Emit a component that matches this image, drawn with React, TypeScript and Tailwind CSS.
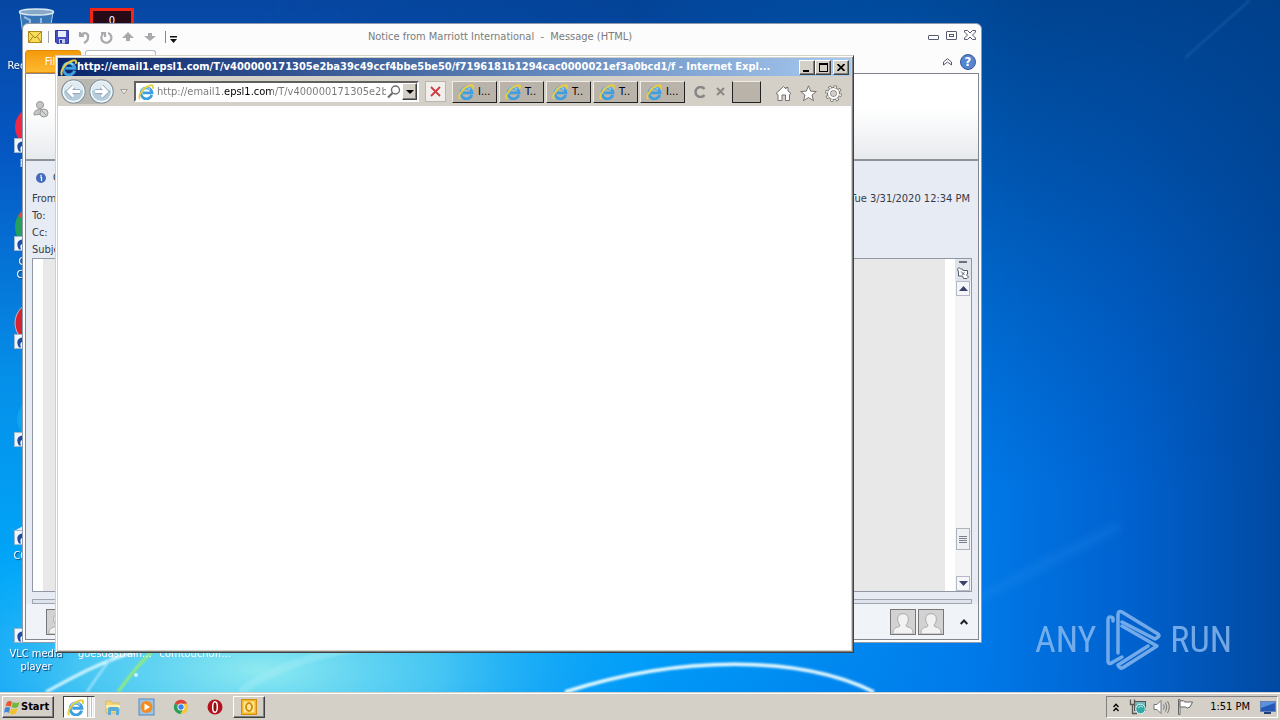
import type { ReactNode } from "react";

const raised =
  "bg-[#d4d0c8] border border-t-white border-l-white border-r-[#404040] border-b-[#404040] shadow-[inset_-1px_-1px_0_#808080]";

function IeLogo({ className = "size-4" }: { className?: string }) {
  return (
    <svg viewBox="0 0 16 16" className={className} aria-hidden="true">
      <path
        d="M13.800 11A5.500 5.500 0 1 1 14 8.800H5"
        fill="none"
        stroke="#3d9fe2"
        strokeWidth="2.800"
      />
      <path d="M3.800 6A5 5 0 0 1 12.200 5.600" fill="none" stroke="#9adcf8" strokeWidth="1.200" />
      <path
        d="M2.200 15C-.2 13.400 2.500 7.400 7 4C11 1 14.800.6 15 2.200C15.200 3 15 4 14.400 4.600"
        fill="none"
        stroke="#e9cf3c"
        strokeWidth="1.800"
      />
    </svg>
  );
}

function Shortcut() {
  return (
    <svg viewBox="0 0 15 15" className="size-[15px]" aria-hidden="true">
      <rect x=".5" y=".5" width="14" height="14" fill="#eef6fc" stroke="#9db7cc" />
      <path d="M5 13.500C2 9 3 4 8 3.500V1.500L13 6L8 10.500V8C6 8.500 6 11 7 13.500Z" fill="#1f4aa3" />
    </svg>
  );
}

function DesktopIcon({ label, children }: { label?: string; children: ReactNode }) {
  return (
    <li className="flex h-[98px] w-[72px] flex-col items-center">
      <div className="relative h-12 w-11 shrink-0">{children}</div>
      <span className="mt-1 text-center leading-[13px] text-white [text-shadow:1px_1px_1px_#0a3a70]">
        {label}
      </span>
    </li>
  );
}

function ShortcutArt({ children }: { children?: ReactNode }) {
  return (
    <>
      <svg viewBox="0 0 44 48" className="h-12 w-11" aria-hidden="true">
        {children}
      </svg>
      <span className="absolute bottom-0 left-0">
        <Shortcut />
      </span>
    </>
  );
}

function Wallpaper() {
  return (
    <svg
      className="absolute inset-0 size-full"
      viewBox="0 0 1280 692"
      preserveAspectRatio="none"
      aria-hidden="true"
    >
      <defs>
        <linearGradient id="base" x1="0" y1="0" x2="0" y2="1">
          <stop offset="0" stopColor="#0747a3" />
          <stop offset=".22" stopColor="#0557c4" />
          <stop offset=".55" stopColor="#0590ea" />
          <stop offset=".85" stopColor="#00a8fa" />
          <stop offset="1" stopColor="#0098f8" />
        </linearGradient>
        <linearGradient id="east" x1="0" y1="0" x2="1" y2="0">
          <stop offset=".5" stopColor="#0079e8" stopOpacity="0" />
          <stop offset=".76" stopColor="#0078e8" stopOpacity=".95" />
          <stop offset=".88" stopColor="#0062cf" />
          <stop offset="1" stopColor="#0049a2" />
        </linearGradient>
        <linearGradient id="north" x1="0" y1="0" x2="0" y2="1">
          <stop offset="0" stopColor="#003f88" stopOpacity=".9" />
          <stop offset=".25" stopColor="#00438f" stopOpacity=".6" />
          <stop offset=".7" stopColor="#0050a8" stopOpacity="0" />
        </linearGradient>
        <linearGradient id="fade" x1="0" y1="0" x2="1" y2="0">
          <stop offset=".2" stopColor="#000" />
          <stop offset=".8" stopColor="#fff" />
        </linearGradient>
        <mask id="northMask">
          <rect width="1280" height="692" fill="url(#fade)" />
        </mask>
        <radialGradient id="glow" gradientUnits="userSpaceOnUse" cx="0" cy="0" r="1" gradientTransform="translate(260 670) scale(400 150)">
          <stop offset="0" stopColor="#8eeaf0" />
          <stop offset=".45" stopColor="#52cdf2" stopOpacity=".85" />
          <stop offset="1" stopColor="#10a8f8" stopOpacity="0" />
        </radialGradient>
        <filter id="soft">
          <feGaussianBlur stdDeviation="1.200" />
        </filter>
        <filter id="haze">
          <feGaussianBlur stdDeviation="4" />
        </filter>
      </defs>
      <rect width="1280" height="692" fill="url(#base)" />
      <rect width="1280" height="692" fill="url(#east)" />
      <rect width="1280" height="692" fill="url(#north)" mask="url(#northMask)" />
      <rect width="1280" height="692" fill="url(#glow)" />
      <g fill="none" filter="url(#soft)">
        <path d="M46 692C75 676 100 662 140 650" stroke="#d6f6ff" strokeWidth="3" />
        <path d="M87 692C95 680 105 665 118 650" stroke="#a5e5fa" strokeWidth="2" />
        <path d="M118 692C128 678 140 662 156 648" stroke="#9cf06b" strokeWidth="2.500" />
        <path d="M240 692C270 670 310 655 360 648" stroke="#b4f3f7" strokeWidth="8" opacity=".3" />
        <path d="M565 692C680 655 800 655 874 692" stroke="#e9fbff" strokeWidth="3.500" />
        <path d="M1185 58L1250 0" stroke="#3a80c8" strokeWidth="3" opacity=".25" />
      </g>
      <path d="M975 600L1120 525" stroke="#3a9af5" strokeWidth="9" opacity=".2" filter="url(#haze)" />
      <circle cx="136" cy="675" r="2" fill="#c8f6ff" />
    </svg>
  );
}

function Desktop() {
  return (
    <>
      <ul className="absolute left-0 top-[7px]">
        <DesktopIcon label="Recycle Bin">
          <svg viewBox="0 0 44 48" className="h-12 w-11" aria-hidden="true">
            <path d="M6 5L11 43H33L39 5Z" fill="#3775b5" stroke="#a9cde8" />
            <ellipse cx="22.500" cy="5" rx="17" ry="3" fill="#87a9c7" stroke="#d9e9f5" strokeWidth="1.500" />
            <path d="M10 10L16 13L15 42M27 11L26 42" stroke="#93bce0" fill="none" strokeWidth="2" />
          </svg>
        </DesktopIcon>
        <DesktopIcon label="Firefox">
          <ShortcutArt>
            <circle cx="22" cy="22" r="21" fill="#f02845" />
          </ShortcutArt>
        </DesktopIcon>
        <DesktopIcon label="Google Chrome">
          <ShortcutArt>
            <circle cx="23" cy="24" r="22" fill="#24a05a" />
            <path d="M4 13A22 22 0 0 1 42 13L23 24Z" fill="#de4c3c" />
          </ShortcutArt>
        </DesktopIcon>
        <DesktopIcon>
          <ShortcutArt>
            <circle cx="22" cy="22" r="21" fill="#d32531" stroke="#f2a6a6" />
          </ShortcutArt>
        </DesktopIcon>
        <DesktopIcon>
          <ShortcutArt>
            <circle cx="24" cy="20" r="21" fill="#10a4ee" />
          </ShortcutArt>
        </DesktopIcon>
        <DesktopIcon label="CCleaner">
          <ShortcutArt>
            <path d="M0 34L18 24L28 40Z" fill="#dce8ee" />
          </ShortcutArt>
        </DesktopIcon>
        <DesktopIcon label="VLC media player">
          <ShortcutArt />
        </DesktopIcon>
      </ul>
      <div className="absolute left-[90px] top-2 flex h-12 w-11 justify-center border-[3px] border-[#f22618] bg-[#260a18] pt-[2px] leading-[15px] text-white">
        0
      </div>
      <div className="absolute left-[78px] top-[647px] flex gap-2 leading-[13px] text-white">
        <span>goesdastrain...</span>
        <span>comtouchoff...</span>
      </div>
      <div className="absolute bottom-[20px] right-[48px] flex h-[64px] items-center gap-2 font-['Roboto_Condensed','Liberation_Sans_Narrow',sans-serif] text-[36px] leading-10 text-[#8fbdf0] opacity-80">
        <span>ANY</span>
        <svg viewBox="0 0 58 64" className="h-[64px] w-[58px]" fill="none" stroke="currentColor" strokeWidth="3.500" strokeLinejoin="round" strokeLinecap="round" aria-hidden="true">
          <path d="M9 13V10Q4 7 4 12V54Q5 57 9 54L18 49" />
          <path d="M14 45V7Q14 2 18 4L54 26Q56 28 54 29L51 31L18 14" />
          <path d="M18 18L53 38L20 59Q16 62 14 57L44 38" />
        </svg>
        <span>RUN</span>
      </div>
    </>
  );
}

function ScrollButton({ up }: { up?: boolean }) {
  return (
    <button
      aria-label={up ? "Scroll up" : "Scroll down"}
      className="flex h-[15px] w-[14px] shrink-0 items-center justify-center border border-[#b4bac4] bg-[#f4f6f9]"
    >
      <svg viewBox="0 0 9 5" className="h-[5px] w-[9px]" aria-hidden="true">
        <path d={up ? "M0 5L4.500 0L9 5Z" : "M0 0L4.500 5L9 0Z"} fill="#3a4268" />
      </svg>
    </button>
  );
}

function Person() {
  return (
    <svg viewBox="0 0 26 26" className="size-[26px] border border-[#777] bg-[#d2d2d2]" aria-hidden="true">
      <path
        d="M2 26C2 20 5 19 9 18C10 17 10 16 8 14C6 8 8 4 13 4C18 4 20 8 18 14C16 16 16 17 17 18C21 19 24 20 24 26Z"
        fill="#f2f2f2"
        stroke="#a5a5a5"
      />
    </svg>
  );
}

function MessageWindow() {
  return (
    <section className="absolute bottom-[49px] left-[22px] right-[298px] top-[23px] flex flex-col rounded-t-md border border-[#8c9aab] bg-[#fcfcfc] px-[2px] pb-[2px] text-[#333a4a]">
      <header className="grid h-[26px] shrink-0 grid-cols-[1fr_auto_1fr] items-center">
        <div className="flex items-center gap-2 pl-[3px]">
          <svg viewBox="0 0 14 12" className="h-3 w-[14px]" aria-hidden="true">
            <rect x=".5" y=".5" width="13" height="11" fill="#f7dc58" stroke="#b28a1c" />
            <path d="M1 1L7 7L13 1M1 11L5 5.500M13 11L9 5.500" fill="none" stroke="#a98224" />
          </svg>
          <span className="-mx-[2px] h-3 w-px bg-[#a5a5a5]" />
          <svg viewBox="0 0 14 14" className="size-[14px]" aria-hidden="true">
            <path d="M.5.5H13.500V13.500H2L.5 12Z" fill="#454fc4" stroke="#3238a0" />
            <path d="M3 1H11V7H3Z" fill="#e9eefc" />
            <path d="M4 9H10V13.500H4Z" fill="#c4cbee" />
            <path d="M5 10H7V13H5Z" fill="#333a94" />
          </svg>
          <svg viewBox="0 0 14 14" className="size-[14px]" fill="none" stroke="#a9a9ad" strokeWidth="2.200" aria-hidden="true">
            <path d="M3 2V6H7M3 6C7 1 12 3 11 8C11 10 9 12 7 13" />
          </svg>
          <svg viewBox="0 0 14 14" className="size-[14px]" fill="none" stroke="#a9a9ad" strokeWidth="2.200" aria-hidden="true">
            <path d="M9 3A5 5 0 1 1 4 4M2 3H6V7" />
          </svg>
          <svg viewBox="0 0 14 14" className="size-[14px]" aria-hidden="true">
            <path d="M7 2L13 8H9V11H5V8H1Z" fill="#a9a9ad" />
          </svg>
          <svg viewBox="0 0 14 14" className="size-[14px]" aria-hidden="true">
            <path d="M7 11L13 6H9V3H5V6H1Z" fill="#a9a9ad" />
          </svg>
          <span className="h-3 w-px bg-[#888]" />
          <svg viewBox="0 0 7 7" className="-ml-1 mt-1 size-[7px]" aria-hidden="true">
            <path d="M0 0H7V1.500H0ZM0 3H7L3.500 7Z" fill="#111" />
          </svg>
        </div>
        <h1 className="whitespace-pre pr-1 text-[#7b7b7b]">Notice from Marriott International  -  Message (HTML)</h1>
        <div className="flex items-center justify-end gap-[7px] pb-1 pr-[3px]">
          <button aria-label="Minimize message" className="mt-1 h-[5px] w-[11px] rounded-[1px] border border-[#555a70]" />
          <button aria-label="Maximize message" className="flex h-[9px] w-[11px] items-center justify-center rounded-[1px] border border-[#555a70]">
            <span className="h-[3px] w-[5px] border border-[#555a70]" />
          </button>
          <button aria-label="Close message">
            <svg viewBox="0 0 12 10" className="h-[10px] w-3" fill="#fff" stroke="#555a70" aria-hidden="true">
              <path d="M.5.5H3.500L6 3L8.500.5H11.500V2L8.500 5L11.500 8V9.500H8.500L6 7L3.500 9.500H.5V8L3.500 5L.5 2Z" />
            </svg>
          </button>
        </div>
      </header>
      <nav className="flex h-[23px] shrink-0 items-center gap-1">
        <button className="h-full w-14 rounded-t-[3px] border border-[#e18a0a] bg-linear-to-b from-[#f39a07] to-[#ffb92e] text-white">
          File
        </button>
        <button aria-label="Message" className="h-full w-[71px] rounded-t-[3px] border border-b-0 border-[#b3b7c5] bg-white" />
        <button aria-label="Minimize the ribbon" className="ml-auto">
          <svg viewBox="0 0 9 8" className="h-2 w-[9px]" fill="#fff" stroke="#555a70" aria-hidden="true">
            <path d="M.5 4L4.500.7L8.500 4V7L4.500 4L.5 7Z" />
          </svg>
        </button>
        <button aria-label="Help" className="ml-1 mr-[3px] flex size-4 items-center justify-center rounded-full border border-[#39599e] bg-[#5585cf] text-[13px] font-bold leading-[14px] text-white">
          ?
        </button>
      </nav>
      <div className="flex min-h-0 flex-1 flex-col border border-[#84858c] bg-[#e7ebf3]">
        <div className="h-[87px] shrink-0 border-b-2 border-[#8d929b] bg-linear-to-b from-white from-40% to-[#e8ebee] pl-[7px] pt-[26px]">
          <svg viewBox="0 0 16 18" className="h-[18px] w-4" aria-hidden="true">
            <circle cx="7" cy="5" r="3.600" fill="#c4c4c4" stroke="#9c9c9c" />
            <path d="M1 15C0 8 12 7 12 14Z" fill="#c4c4c4" stroke="#9c9c9c" />
            <circle cx="11" cy="13" r="4" fill="#d4d4d4" stroke="#999" />
            <path d="M8.500 10.500L13.500 15.500" stroke="#999" />
          </svg>
        </div>
        <div className="flex h-[29px] shrink-0 items-center gap-[7px] pl-[10px] pt-1">
          <svg viewBox="0 0 10 10" className="size-[10px]" aria-hidden="true">
            <circle cx="5" cy="5" r="5" fill="#426bc0" />
            <path d="M4 4H5.500V8M5 1.800V3" stroke="#fff" fill="none" strokeWidth="1.200" />
          </svg>
          <span>Click here to download pictures.</span>
        </div>
        <dl className="grid shrink-0 grid-cols-[56px_1fr] px-[6px] leading-[17px]">
          <dt>From:</dt>
          <dd className="pr-[2px] text-right">Tue 3/31/2020 12:34 PM</dd>
          <dt>To:</dt>
          <dd />
          <dt>Cc:</dt>
          <dd />
          <dt>Subject:</dt>
          <dd />
        </dl>
        <div className="mx-[6px] flex min-h-0 flex-1 border border-[#9297a5] bg-white">
          <div className="ml-[10px] flex-1 bg-[#e8e8e8]" />
          <div className="ml-[10px] flex w-4 flex-col items-center bg-[#f4f4f6]">
            <div className="flex h-[22px] w-full shrink-0 flex-col items-center bg-[#dfe3ea]">
              <span className="my-[2px] h-[2px] w-2 shrink-0 bg-[#697080]" />
              <button aria-label="Select browse object" className="pt-[2px]">
                <svg viewBox="0 0 12 12" className="size-3" fill="#fff" stroke="#555a70" aria-hidden="true">
                  <path d="M.5 2L2 .5L3.500 2H5.500L6 3.500H10.500V7L9.500 8L11.500 10L10 11.500H6.500L5.500 9H1.500V5Z" />
                  <path d="M4 4.500L7.500 8M7.500 5.500L5 7.500" />
                </svg>
              </button>
            </div>
            <ScrollButton up />
            <button aria-label="Scroll position" className="mb-[26px] mt-auto flex h-[22px] w-[14px] flex-col items-center justify-center gap-px border border-[#aeb4bd] bg-[#eef0f3]">
              <span className="h-px w-2 bg-[#777f8c]" />
              <span className="h-px w-2 bg-[#777f8c]" />
              <span className="h-px w-2 bg-[#777f8c]" />
              <span className="h-px w-2 bg-[#777f8c]" />
            </button>
            <ScrollButton />
          </div>
        </div>
        <div className="mx-[6px] mt-[7px] h-[5px] shrink-0 border border-[#9da4b2] bg-[#dfe4ec]" />
        <footer className="flex h-[35px] shrink-0 items-center bg-[#f0f3f7] pl-5 pr-[10px]">
          <Person />
          <span className="ml-auto flex gap-[2px]">
            <Person />
            <Person />
          </span>
          <button aria-label="Expand people pane" className="ml-4">
            <svg viewBox="0 0 8 6" className="h-[6px] w-2" fill="none" stroke="#222" strokeWidth="2" aria-hidden="true">
              <path d="M.7 5L4 1.500L7.300 5" />
            </svg>
          </button>
        </footer>
      </div>
    </section>
  );
}

function RoundArrow({ label, d }: { label: string; d: string }) {
  return (
    <button aria-label={label}>
      <svg viewBox="0 0 25 25" className="size-[25px]" aria-hidden="true">
        <circle cx="12.500" cy="12.500" r="11.500" fill="#b4cbd9" stroke="#7e909c" strokeWidth="1.200" />
        <circle cx="12.500" cy="12.500" r="10.300" fill="none" stroke="#f2f8fb" strokeWidth="1.500" />
        <path d="M3 12A9.500 9.500 0 0 1 22 12C17 9 8 9 3 12Z" fill="#dfeaf1" />
        <path d={d} fill="none" stroke="#8aa4b5" strokeWidth="4.500" />
        <path d={d} fill="none" stroke="#fff" strokeWidth="3" />
      </svg>
    </button>
  );
}

function BrowserWindow() {
  const tabs = ["I...", "T..", "T..", "T..", "I..."];
  return (
    <section className="absolute bottom-[39px] left-[55px] right-[426px] top-[55px] flex flex-col border border-b-[#404040] border-l-[#d4d0c8] border-r-[#404040] border-t-[#d4d0c8] bg-[#d4d0c8] p-[2px] shadow-[inset_1px_1px_0_#fff,inset_-1px_-1px_0_#808080]">
      <header className="flex h-[18px] shrink-0 items-center bg-linear-to-r from-[#0a246a] to-[#a6caf0] pl-[2px] pr-[2px]">
        <IeLogo className="size-[17px] shrink-0" />
        <h2 className="min-w-0 flex-1 truncate font-bold text-white">
          http://email1.epsl1.com/T/v400000171305e2ba39c49ccf4bbe5be50/f7196181b1294cac0000021ef3a0bcd1/f - Internet Expl...
        </h2>
        <div className="ml-1 flex">
          <button aria-label="Minimize" className={`flex h-[15px] w-4 items-end pb-[2px] pl-[3px] ${raised}`}>
            <span className="h-[2px] w-[6px] bg-black" />
          </button>
          <button aria-label="Maximize" className={`flex h-[15px] w-4 items-center justify-center ${raised}`}>
            <span className="h-[9px] w-[9px] border border-t-2 border-black" />
          </button>
          <button aria-label="Close" className={`ml-[2px] flex h-[15px] w-4 items-center justify-center ${raised}`}>
            <svg viewBox="0 0 8 7" className="h-[7px] w-2" stroke="#000" strokeWidth="1.700" aria-hidden="true">
              <path d="M.5 0L7.500 7M7.500 0L.5 7" />
            </svg>
          </button>
        </div>
      </header>
      <nav className="flex h-[30px] shrink-0 items-center pl-[3px] pr-[9px] pt-px">
        <div className="flex gap-[3px] rounded-full bg-[#b9b7b1]">
          <RoundArrow label="Back" d="M19 12.500H8M12.500 7.500L7.500 12.500L12.500 17.500" />
          <RoundArrow label="Forward" d="M6 12.500H17M12.500 7.500L17.500 12.500L12.500 17.500" />
        </div>
        <svg viewBox="0 0 8 6" className="ml-1.5 h-[6px] w-2" aria-hidden="true">
          <path d="M.7.500H7.300L4 5Z" fill="#f0eeea" stroke="#a09d96" />
        </svg>
        <form className="ml-1.5 flex h-[21px] min-w-0 flex-1 items-center border-2 border-b-white border-l-[#606060] border-r-white border-t-[#606060] bg-white pl-[2px]">
          <IeLogo className="size-4 shrink-0" />
          <input
            aria-label="Address"
            readOnly
            value="http://email1.epsl1.com/T/v400000171305e2ba39c49ccf4bbe5be50/"
            className="ml-[3px] min-w-0 flex-1 bg-[linear-gradient(90deg,#777_66px,#000_66px,#000_115px,#777_115px)] bg-clip-text leading-4 text-transparent outline-none"
          />
          <svg viewBox="0 0 14 14" className="ml-px size-[14px] shrink-0" fill="none" stroke="#6e6e6e" aria-hidden="true">
            <circle cx="8.500" cy="5" r="4" strokeWidth="1.400" />
            <path d="M5.500 8L1 12.500" strokeWidth="2.200" />
          </svg>
          <button type="button" aria-label="Address history" className={`ml-px flex h-[17px] w-[15px] shrink-0 items-center justify-center ${raised}`}>
            <svg viewBox="0 0 8 4" className="h-1 w-2" aria-hidden="true">
              <path d="M0 0H8L4 4Z" />
            </svg>
          </button>
        </form>
        <button aria-label="Stop" className="ml-1.5 flex size-[21px] shrink-0 items-center justify-center border border-[#b9b5ad] bg-[#f1efec]">
          <svg viewBox="0 0 11 11" className="size-[11px]" stroke="#cf3a44" strokeWidth="1.800" aria-hidden="true">
            <path d="M1 1L10 10M10 1L1 10" />
          </svg>
        </button>
        <div className="ml-1.5 flex h-[22px] shrink-0 gap-[2px]">
          {tabs.map((name, i) => (
            <button
              key={i}
              className="flex w-[45px] items-center gap-1 border border-b-[#222] border-l-[#efece6] border-r-[#222] border-t-[#efece6] bg-[#bab3aa] pl-[5px]"
            >
              <IeLogo className="size-4 shrink-0" />
              <span>{name}</span>
            </button>
          ))}
          <div className="flex w-[43px] items-center justify-between pl-[7px] pr-[5px]">
            <svg viewBox="0 0 12 12" className="size-3" fill="none" stroke="#858585" strokeWidth="2.400" aria-hidden="true">
              <path d="M10.500 3A5 5 0 1 0 10.500 9" />
            </svg>
            <button aria-label="Close tab">
              <svg viewBox="0 0 9 9" className="size-[9px]" stroke="#8b8883" strokeWidth="2" aria-hidden="true">
                <path d="M1 1L8 8M8 1L1 8" />
              </svg>
            </button>
          </div>
          <button aria-label="New tab" className="w-[29px] border border-b-[#222] border-l-[#222] border-r-[#222] border-t-[#efece6] bg-[#bab3aa]" />
        </div>
        <div className="ml-[14px] flex shrink-0 gap-2 pt-[3px]">
          <button aria-label="Home">
            <svg viewBox="0 0 17 17" className="size-[17px]" fill="#fff" stroke="#77736d" strokeLinejoin="round" aria-hidden="true">
              <path d="M1 8.500L8.500 1.500L11 4V2.500H13V6L16 8.500L14.500 9.500V15.500H10.500V10H7V15.500H3V9.500Z" />
            </svg>
          </button>
          <button aria-label="Favorites">
            <svg viewBox="0 0 17 17" className="size-[17px]" fill="#fff" stroke="#77736d" strokeLinejoin="round" aria-hidden="true">
              <path d="M8.500.8L10.700 6.200L16.300 6.500L12 10L13.500 15.700L8.500 12.500L3.500 15.700L5 10L.7 6.500L6.300 6.200Z" />
            </svg>
          </button>
          <button aria-label="Tools">
            <svg viewBox="0 0 17 17" className="size-[17px]" aria-hidden="true">
              <circle cx="8.500" cy="8.500" r="6.700" fill="none" stroke="#77736d" strokeWidth="3.300" strokeDasharray="3 2.262" />
              <circle cx="8.500" cy="8.500" r="4.500" fill="none" stroke="#77736d" strokeWidth="4" />
              <circle cx="8.500" cy="8.500" r="6.700" fill="none" stroke="#fff" strokeWidth="1.800" strokeDasharray="1.600 3.662" strokeDashoffset="-.7" />
              <circle cx="8.500" cy="8.500" r="4.400" fill="none" stroke="#fff" strokeWidth="2.300" />
              <circle cx="8.500" cy="8.500" r="2.300" fill="#d4d0c8" />
            </svg>
          </button>
        </div>
      </nav>
      <main className="min-h-0 flex-1 bg-white" />
    </section>
  );
}

function Taskbar() {
  return (
    <footer className="flex h-7 shrink-0 items-center border-t border-[#d4d0c8] bg-[#d4d0c8] pl-[2px] pr-[2px] pt-px text-black shadow-[inset_0_1px_0_#fff]">
      <button className={`flex h-[22px] w-[52px] items-center gap-px pl-px text-[11px] font-bold ${raised}`}>
        <svg viewBox="0 0 16 15" className="h-[15px] w-4 shrink-0" aria-hidden="true">
          <path d="M3 2Q6 0 8 2L6.500 7Q4 5 1.500 6.500Z" fill="#e8552b" />
          <path d="M9 2Q12 4 15.500 2L14 7Q11 9 7.500 7Z" fill="#73b93c" />
          <path d="M1 8Q4 6 6 8L5 13Q2 11 0 13Z" fill="#4385d8" />
          <path d="M7 8.500Q10 10 13.500 8.500L12 13.500Q9 15.500 5.500 13.500Z" fill="#f2c22c" />
        </svg>
        Start
      </button>
      <button aria-label="Internet Explorer" className="ml-[9px] flex h-[22px] w-8 items-center border border-b-white border-l-[#404040] border-r-white border-t-[#404040] bg-[#e9e7e3]">
        <span className="flex h-full w-6 items-center justify-center border-r border-[#a9a59e] bg-white">
          <IeLogo className="size-[17px]" />
        </span>
        <span className="ml-[2px] h-full w-[3px] border-x border-white bg-[#c4c0b8]" />
      </button>
      <div className="ml-[9px] flex items-center gap-[16px]">
        <button aria-label="Explorer">
          <svg viewBox="0 0 18 18" className="size-[18px]" aria-hidden="true">
            <path d="M2 3H7L8 5H15V15H2Z" fill="#f3d877" stroke="#c7a94e" strokeWidth=".6" />
            <path d="M2 7H16V10H2Z" fill="#fbeeb0" />
            <path d="M4 17V11Q4 9 6 9H13Q15 9 15 11V17H12V13H7V17Z" fill="#58acd9" />
          </svg>
        </button>
        <button aria-label="Media Player">
          <svg viewBox="0 0 18 18" className="size-[18px]" aria-hidden="true">
            <rect x="1" y="1" width="15" height="16" fill="#9ac4ea" stroke="#5589bd" />
            <circle cx="8.500" cy="9" r="6" fill="#f38b1d" />
            <path d="M6.500 5.500L12 9L6.500 12.500Z" fill="#fff" />
          </svg>
        </button>
        <button aria-label="Chrome">
          <svg viewBox="0 0 18 18" className="size-[18px]" aria-hidden="true">
            <path d="M9 9L2.800 5.400A7 7 0 0 1 15.200 5.600L9 6Z" fill="#dc4335" />
            <path d="M9 9L2.800 5.400A7 7 0 0 0 8.600 16L11.500 11Z" fill="#2f9e55" />
            <path d="M9 6H15.400A7 7 0 0 1 8.600 16L12 10Z" fill="#f6c72f" />
            <circle cx="9" cy="9" r="3.600" fill="#fff" />
            <circle cx="9" cy="9" r="2.700" fill="#4080ee" />
          </svg>
        </button>
        <button aria-label="Opera">
          <svg viewBox="0 0 18 18" className="size-[18px]" aria-hidden="true">
            <circle cx="9" cy="9" r="7.500" fill="#b5121b" />
            <ellipse cx="9" cy="9" rx="2.300" ry="5.300" fill="#8c0e15" stroke="#fff" strokeWidth="1.500" />
          </svg>
        </button>
      </div>
      <button aria-label="Outlook" className={`ml-[9px] flex h-[22px] w-8 items-center justify-center ${raised}`}>
        <svg viewBox="0 0 16 16" className="size-4" aria-hidden="true">
          <rect x=".5" y=".5" width="15" height="15" fill="#f5b727" stroke="#d28e10" />
          <rect x="2.500" y="2.500" width="11" height="11" fill="#ffe694" />
          <ellipse cx="8" cy="8" rx="3" ry="4" fill="none" stroke="#d28a0c" strokeWidth="1.800" />
        </svg>
      </button>
      <div className="ml-auto flex h-[22px] items-center border border-b-white border-l-[#808080] border-r-white border-t-[#808080] pl-[6px] pr-px">
        <button aria-label="Show hidden icons">
          <svg viewBox="0 0 6 9" className="h-[9px] w-[6px]" fill="none" stroke="#000" strokeWidth="1.300" aria-hidden="true">
            <path d="M.5 4L3 1.200L5.500 4M.5 8L3 5.200L5.500 8" />
          </svg>
        </button>
        <svg viewBox="0 0 17 16" className="ml-[10px] h-4 w-[17px]" aria-hidden="true">
          <rect x="5.500" y="2.500" width="11" height="9" fill="#77b6b8" stroke="#555" />
          <path d="M1.500.5V5.500H5.500V.5M3.500 5.500V14.500H8" fill="none" stroke="#555" strokeWidth="1.300" />
          <circle cx="11.500" cy="10" r="4.800" fill="#35a7a7" stroke="#e0f3f3" />
          <path d="M9 9Q11 6 14 8" fill="none" stroke="#b8eee8" />
        </svg>
        <svg viewBox="0 0 17 16" className="ml-[7px] h-4 w-[17px]" fill="none" stroke="#777" aria-hidden="true">
          <path d="M1 5.500H4L8 1.500V14.500L4 10.500H1Z" fill="#fff" />
          <path d="M10.500 5.500Q12 8 10.500 10.500M12.500 3.500Q15 8 12.500 12.500M14.500 2Q18 8 14.500 14" />
        </svg>
        <svg viewBox="0 0 17 16" className="ml-[7px] h-4 w-[17px]" fill="#fff" stroke="#666" aria-hidden="true">
          <path d="M1.500.5H3V15.500H1.500Z" />
          <path d="M3 2Q7 1 8 3H15.500L13 8Q10 10 8.500 8H3Z" />
        </svg>
        <time className="ml-4 whitespace-nowrap">1:51 PM</time>
        <svg viewBox="0 0 16 14" className="ml-[10px] h-[14px] w-4" aria-hidden="true">
          <rect x=".5" y="1.500" width="15" height="10" fill="#2459b5" stroke="#6883b0" />
          <path d="M1 8L15 3V2H1Z" fill="#5b92df" />
          <path d="M4 13H11" stroke="#223f78" strokeWidth="2" />
        </svg>
      </div>
    </footer>
  );
}

export default function App() {
  return (
    <div className="flex h-screen flex-col overflow-hidden font-['DejaVu_Sans_Condensed','DejaVu_Sans',sans-serif] text-[11px] leading-[14px]">
      <div className="relative min-h-0 flex-1 overflow-hidden">
        <Wallpaper />
        <Desktop />
        <MessageWindow />
        <BrowserWindow />
      </div>
      <Taskbar />
    </div>
  );
}
